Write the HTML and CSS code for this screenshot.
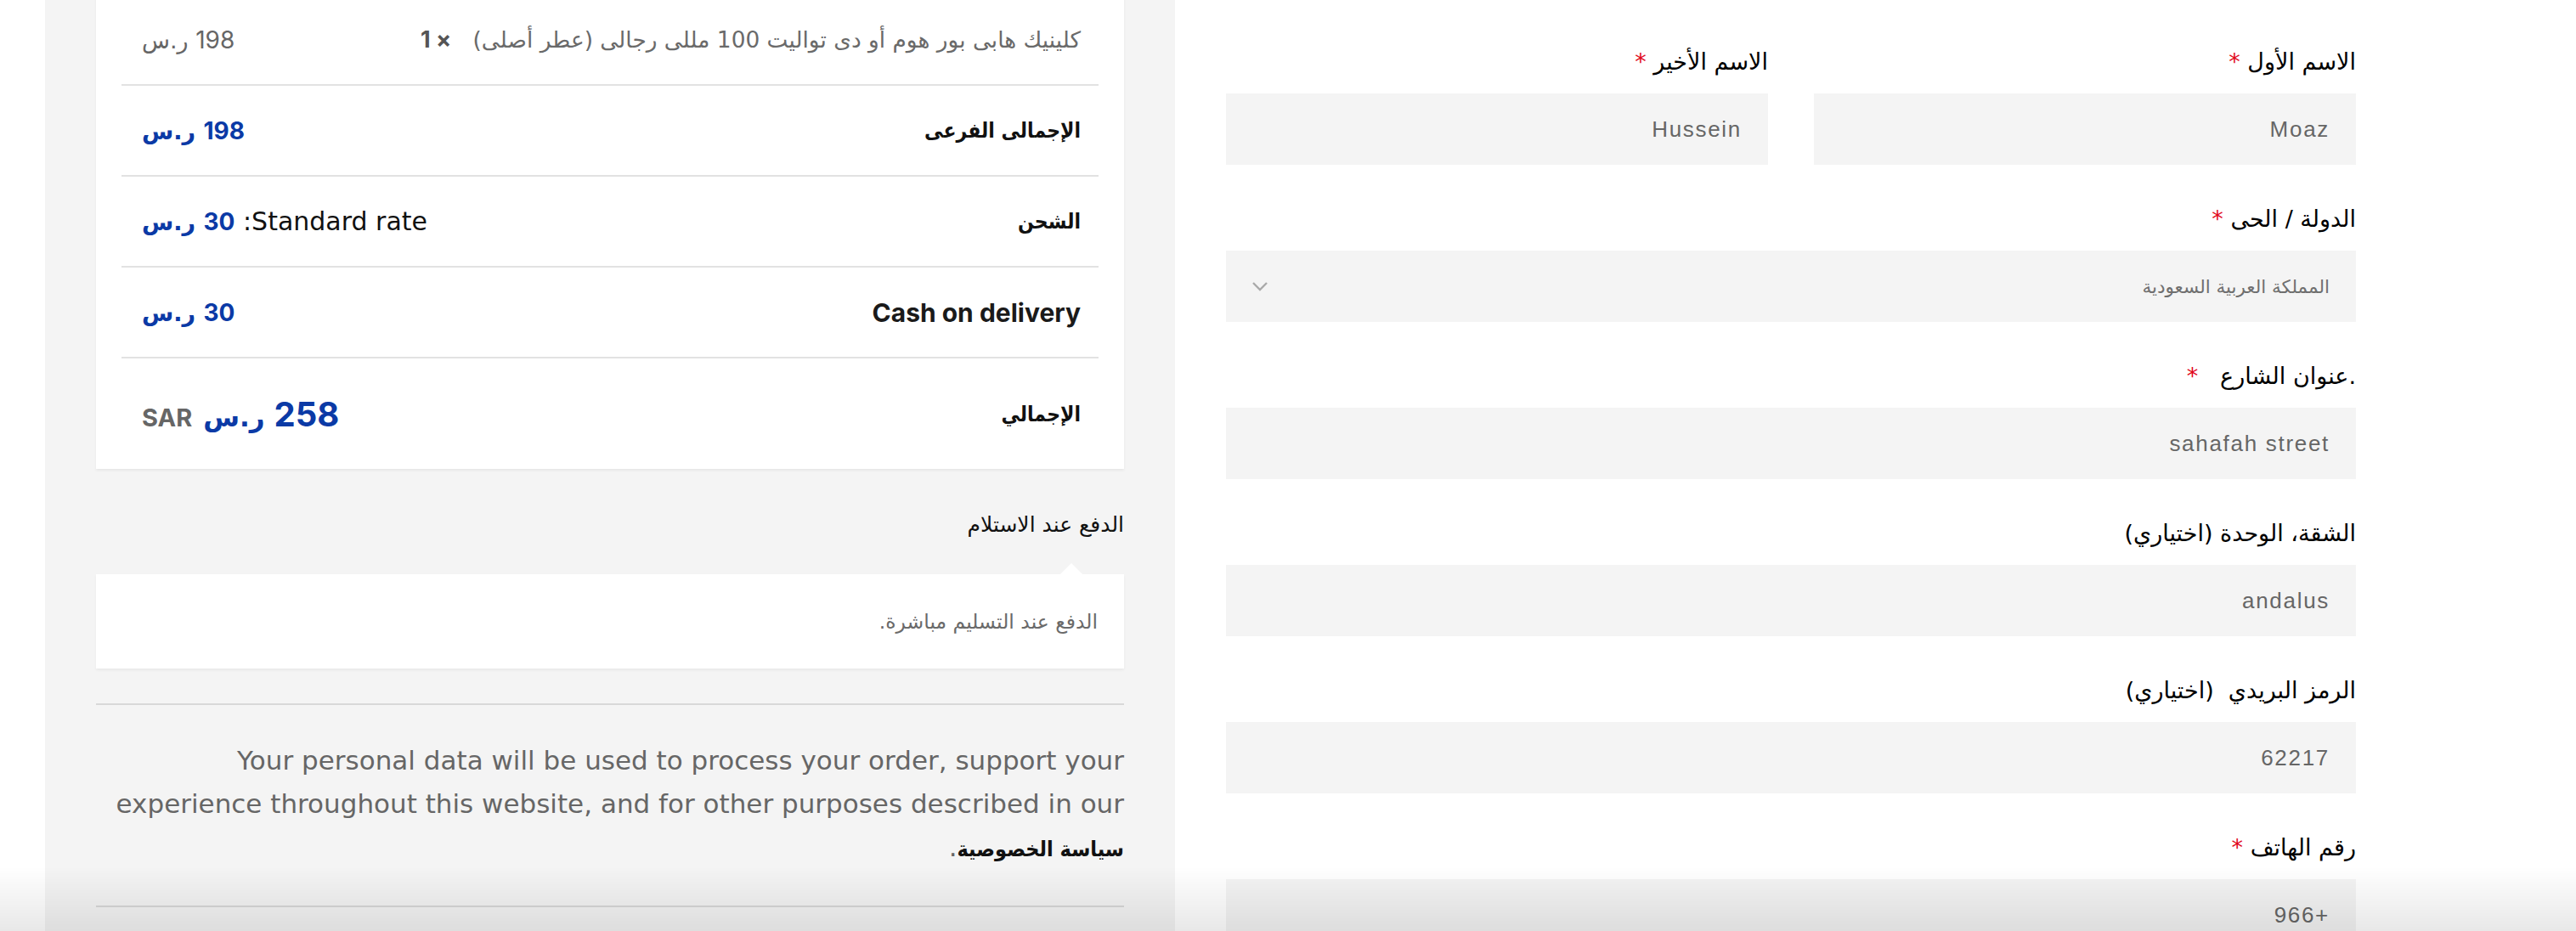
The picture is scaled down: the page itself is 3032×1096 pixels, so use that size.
FILE: index.html
```html
<!DOCTYPE html>
<html lang="ar" dir="rtl">
<head>
<meta charset="utf-8">
<title>إتمام الطلب</title>
<link rel="stylesheet" href="styles.css">
</head>
<body>
<div class="page">
  <form class="billing">
    <div class="two-col">
      <div class="field">
        <label class="label">الاسم الأول <span class="req">*</span></label>
        <div class="input">Moaz</div>
      </div>
      <div class="field">
        <label class="label">الاسم الأخير <span class="req">*</span></label>
        <div class="input">Hussein</div>
      </div>
    </div>
    <div class="field">
      <label class="label">الدولة / الحى <span class="req">*</span></label>
      <div class="input select">
        <span class="select-value">المملكة العربية السعودية</span>
        <svg class="chevron" width="20" height="12" viewBox="0 0 20 12"><polyline points="2,2 10,10 18,2" fill="none" stroke="#a9a9a9" stroke-width="2.4"/></svg>
      </div>
    </div>
    <div class="field">
      <label class="label">.عنوان الشارع&nbsp;&nbsp; <span class="req">*</span></label>
      <div class="input">sahafah street</div>
    </div>
    <div class="field">
      <label class="label">الشقة، الوحدة (اختياري)</label>
      <div class="input">andalus</div>
    </div>
    <div class="field">
      <label class="label">الرمز البريدي&nbsp; (اختياري)</label>
      <div class="input">62217</div>
    </div>
    <div class="field">
      <label class="label">رقم الهاتف <span class="req">*</span></label>
      <div class="input">+966</div>
    </div>
  </form>

  <aside class="summary">
    <div class="card">
      <div class="line item">
        <span class="product">كلينيك هابى بور هوم أو دى تواليت 100 مللى رجالى (عطر أصلى)&nbsp;&nbsp; <strong class="qty">× 1</strong></span>
        <bdi class="amount muted"><span class="num">198</span>&nbsp;<span class="sym">ر.س</span></bdi>
      </div>
      <div class="line">
        <span class="key">الإجمالى الفرعى</span>
        <bdi class="amount blue"><span class="num">198</span>&nbsp;<span class="sym">ر.س</span></bdi>
      </div>
      <div class="line">
        <span class="key">الشحن</span>
        <span class="ship">Standard rate: <bdi class="amount blue"><span class="num">30</span>&nbsp;<span class="sym">ر.س</span></bdi></span>
      </div>
      <div class="line">
        <span class="key latin">Cash on delivery</span>
        <bdi class="amount blue"><span class="num">30</span>&nbsp;<span class="sym">ر.س</span></bdi>
      </div>
      <div class="line total">
        <span class="key">الإجمالي</span>
        <span class="grand"><bdi class="grand-amount"><span class="num">258</span>&nbsp;<span class="sym">ر.س</span></bdi><span class="currency">SAR</span></span>
      </div>
    </div>

    <div class="pay-title">الدفع عند الاستلام</div>
    <div class="pay-box">الدفع عند التسليم مباشرة.</div>

    <div class="sep"></div>
    <p class="privacy">Your personal data will be used to process your order, support your experience throughout this website, and for other purposes described in our <a class="policy">سياسة الخصوصية</a>.</p>
    <div class="sep last"></div>
  </aside>
</div>
<div class="fade"></div>
</body>
</html>
```

FILE: styles.css
```css
* { box-sizing: border-box; }

html, body {
  margin: 0;
  background: #fff;
}

body {
  height: 1096px;
  overflow: hidden;
  font-family: "Liberation Sans", "DejaVu Sans", sans-serif;
  color: #000;
}

.page {
  display: flex;
  align-items: flex-start;
  gap: 60px;
  padding-right: 259px;
  height: 1096px;
}

/* ---------- billing form ---------- */
.billing {
  flex: none;
  width: 1330px;
  padding-top: 53px;
}

.two-col {
  display: flex;
  gap: 54px;
}

.two-col .field {
  flex: 1;
}

.field {
  margin-bottom: 44px;
}

.label {
  display: block;
  height: 40px;
  line-height: 40px;
  margin-bottom: 17px;
  font-family: "DejaVu Sans", sans-serif;
  font-size: 27px;
  color: #000;
  white-space: pre;
}

.req {
  color: #e1081b;
}

.input {
  display: flex;
  align-items: center;
  height: 84px;
  padding: 0 31px;
  background: #f4f4f4;
  font-size: 26px;
  letter-spacing: 1.7px;
  color: #666;
}

.select {
  justify-content: space-between;
  letter-spacing: 0;
}

.select-value {
  font-family: "DejaVu Sans", sans-serif;
  font-size: 21.5px;
  color: #6f6f6f;
}

.chevron {
  display: block;
  margin-left: -1px;
}

/* ---------- order summary ---------- */
.summary {
  flex: none;
  width: 1330px;
  height: 1096px;
  padding: 0 60px;
  background: #f4f4f4;
}

.card {
  margin-top: -6px;
  padding: 0 30px;
  background: #fff;
  box-shadow: 0 2px 3px rgba(0, 0, 0, 0.06);
}

.line {
  display: flex;
  align-items: center;
  justify-content: space-between;
  height: 107px;
  padding: 0 21px 0 24px;
  border-bottom: 2px solid #e2e2e2;
  font-family: "DejaVu Sans", sans-serif;
  font-size: 27px;
}

.line.total {
  height: 130px;
  border-bottom: none;
}

.product {
  font-family: "DejaVu Sans", sans-serif;
  font-size: 26.4px;
  color: #6a6a6a;
  white-space: pre;
}

.qty {
  font-family: "Inter", sans-serif;
  font-weight: 700;
  font-size: 27px;
  color: #555;
}

.key {
  font-family: "DejaVu Sans Condensed", "DejaVu Sans", sans-serif;
  font-weight: 700;
  font-size: 24.5px;
  color: #111;
}

.key.latin {
  font-family: "Inter", sans-serif;
  font-size: 30px;
  color: #1a1a1a;
}

.amount {
  font-size: 27px;
}

.num {
  font-family: "Inter", sans-serif;
  font-size: 28px;
}

.sym {
  font-family: "DejaVu Sans", sans-serif;
}

.amount.muted {
  color: #666;
}

.amount.blue {
  color: #0b3aa6;
  font-weight: 700;
}

.ship {
  font-family: "DejaVu Sans", sans-serif;
  font-size: 30px;
  color: #111;
}

.ship .amount {
  font-size: 27px;
}

.grand {
  display: flex;
  align-items: baseline;
  gap: 13px;
}

.grand-amount {
  font-weight: 700;
  color: #0b3aa6;
  font-size: 31px;
}

.grand-amount .num {
  font-size: 40px;
}

.currency {
  font-family: "Inter", sans-serif;
  font-weight: 700;
  font-size: 29px;
  color: #666;
}

.pay-title {
  margin-top: 46px;
  height: 40px;
  line-height: 40px;
  font-family: "DejaVu Sans", sans-serif;
  font-size: 25px;
  color: #111;
}

.pay-box {
  position: relative;
  display: flex;
  align-items: center;
  height: 111px;
  margin-top: 38px;
  padding: 0 31px;
  background: #fff;
  font-family: "DejaVu Sans", sans-serif;
  font-size: 23.5px;
  color: #6a6a6a;
  box-shadow: 0 2px 3px rgba(0, 0, 0, 0.05);
}

.pay-box::before {
  content: "";
  position: absolute;
  top: -13px;
  right: 49px;
  border-left: 13px solid transparent;
  border-right: 13px solid transparent;
  border-bottom: 13px solid #fff;
}

.sep {
  margin-top: 41px;
  border-top: 2px solid #d8d8d8;
}

.privacy {
  margin: 0;
  padding: 40px 0 0 0;
  line-height: 51px;
  font-family: "DejaVu Sans", sans-serif;
  font-size: 31px;
  color: #666;
}

.policy {
  font-family: "DejaVu Sans Condensed", "DejaVu Sans", sans-serif;
  font-weight: 700;
  font-size: 25px;
  color: #111;
  text-decoration: none;
}

/* bottom fade of the viewport */
.fade {
  position: fixed;
  left: 0;
  right: 0;
  bottom: 0;
  height: 76px;
  background: linear-gradient(to bottom, rgba(0, 0, 0, 0), rgba(0, 0, 0, 0.09));
  pointer-events: none;
}
```
